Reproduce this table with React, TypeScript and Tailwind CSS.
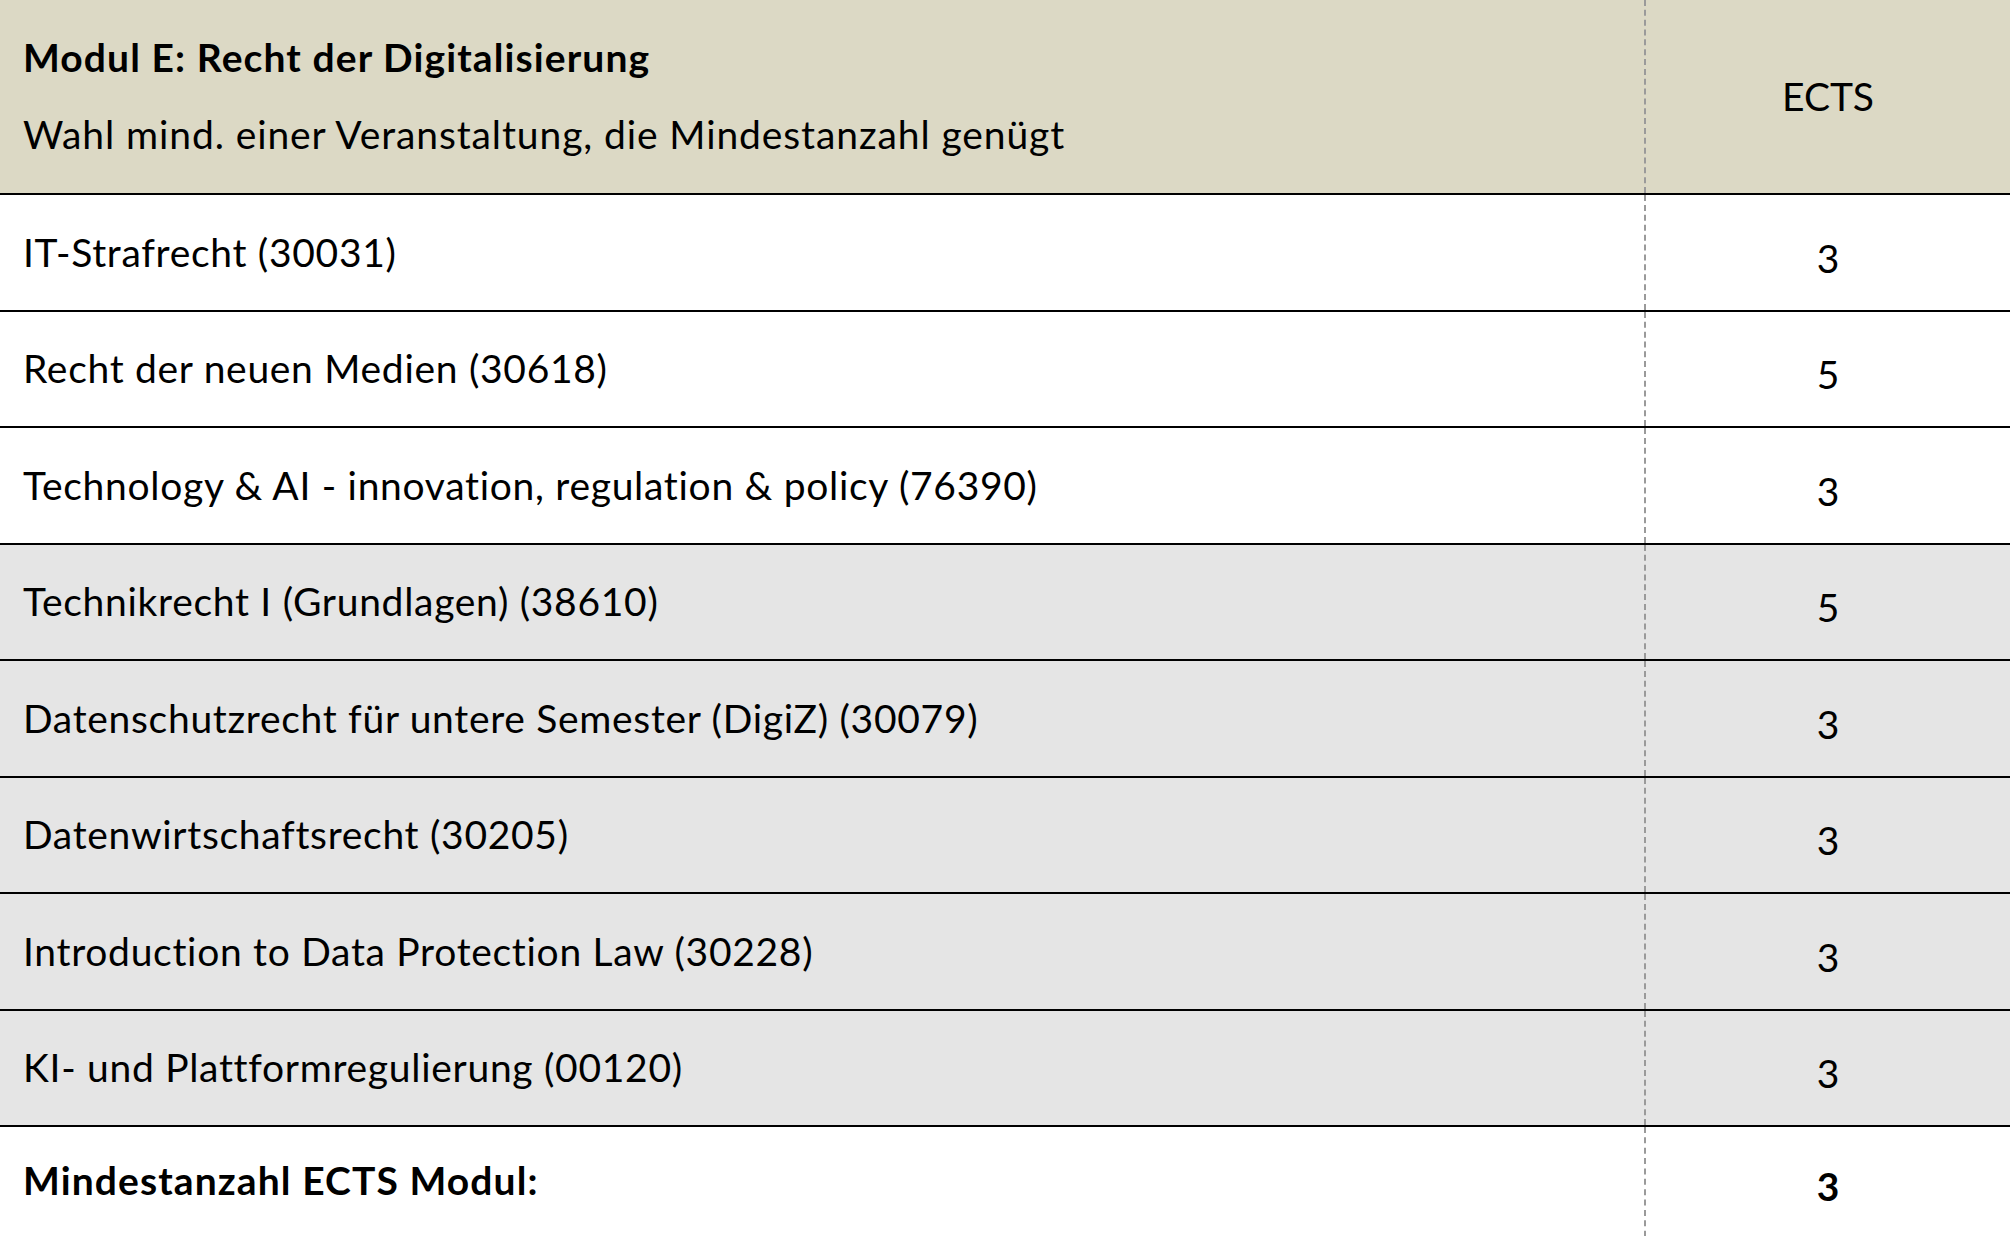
import React from "react";

const rows = [
  { name: "IT-Strafrecht (30031)", ects: 3, gray: false },
  { name: "Recht der neuen Medien (30618)", ects: 5, gray: false },
  { name: "Technology & AI - innovation, regulation & policy (76390)", ects: 3, gray: false },
  { name: "Technikrecht I (Grundlagen) (38610)", ects: 5, gray: true },
  { name: "Datenschutzrecht für untere Semester (DigiZ) (30079)", ects: 3, gray: true },
  { name: "Datenwirtschaftsrecht (30205)", ects: 3, gray: true },
  { name: "Introduction to Data Protection Law (30228)", ects: 3, gray: true },
  { name: "KI- und Plattformregulierung (00120)", ects: 3, gray: true },
];

export default function App() {
  return (
    <div className="w-[2010px] h-[1236px] overflow-hidden bg-white text-black font-['Lato',sans-serif] text-[39px] leading-none">
      {/* header */}
      <div className="flex h-[195px] bg-[#dcd9c5] border-b-2 border-black">
        <div className="flex-1 flex flex-col justify-center gap-[38px] pl-[23px] pb-[2px]">
          <div className="font-bold tracking-[1.1px]">Modul E: Recht der Digitalisierung</div>
          <div className="tracking-[0.9px]">Wahl mind. einer Veranstaltung, die Mindestanzahl genügt</div>
        </div>
        <div className="w-[366px] border-l-2 border-dashed border-[#9a9a9a] flex items-center justify-center">
          ECTS
        </div>
      </div>

      {rows.map((r) => (
        <div
          key={r.name}
          className={`flex h-[116.5px] border-b-2 border-black ${r.gray ? "bg-[#e5e5e5]" : "bg-white"}`}
        >
          <div className="flex-1 flex items-center pl-[23px] tracking-[0.7px]">{r.name}</div>
          <div className="w-[366px] border-l-2 border-dashed border-[#9a9a9a] flex items-center justify-center pt-[12px]">
            {r.ects}
          </div>
        </div>
      ))}

      {/* footer */}
      <div className="flex h-[120px] bg-white">
        <div className="flex-1 flex items-center pl-[23px] pb-[14px] font-bold tracking-[1.1px]">
          Mindestanzahl ECTS Modul:
        </div>
        <div className="w-[366px] border-l-2 border-dashed border-[#9a9a9a] flex items-center justify-center font-bold pb-[2px]">
          3
        </div>
      </div>
    </div>
  );
}
